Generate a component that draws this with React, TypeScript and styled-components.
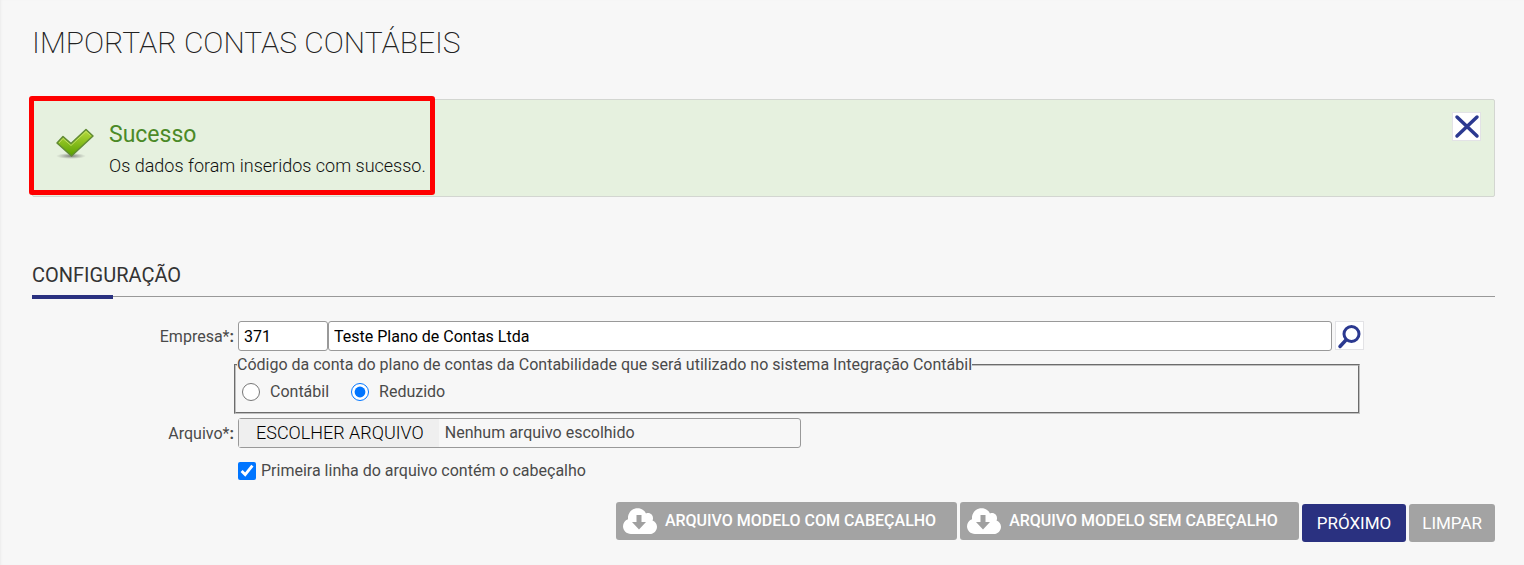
import React, { useState } from "react";
import styled, { createGlobalStyle } from "styled-components";

const navy = "#2a3180";
const grey = "#a3a3a3";

const GlobalStyle = createGlobalStyle`
  *, *::before, *::after { box-sizing: border-box; }
  html { background: #f7f7f7; }
  body {
    margin: 0;
    background: #f7f7f7;
    color: #4a4a4a;
    font-family: Roboto, "Liberation Sans", sans-serif;
    font-size: 16px;
    line-height: 20px;
  }
  input, button { font-family: inherit; font-size: inherit; line-height: inherit; }
`;

const Page = styled.main`
  min-height: 100vh;
  padding: 25px 29px 22px 32px;
  box-shadow: inset 2px 0 2px -1px #ececec;
`;

const Title = styled.h1`
  margin: 0 0 38px;
  color: #222;
  font-size: 30px;
  font-weight: 200;
  line-height: 36px;
`;

const Alert = styled.section`
  position: relative;
  display: flex;
  align-items: flex-start;
  height: 98px;
  padding: 12px 13px 0 22px;
  background: #e6f1df;
  border: 1px solid #d3d6d1;
  border-radius: 2px;
`;

const Highlight = styled.div`
  position: absolute;
  top: -4px;
  left: -4px;
  width: 406px;
  height: 99px;
  border: 5px solid #f00;
  border-radius: 3px;
  pointer-events: none;
`;

const CheckIcon = styled.svg`
  flex: none;
  width: 40px;
  height: 36px;
  margin-top: 14px;
`;

const AlertText = styled.div`
  flex: 1;
  margin-left: 14px;
  padding-top: 8px;
`;

const AlertTitle = styled.h2`
  margin: 0;
  color: #4b8a28;
  font-size: 23px;
  font-weight: 400;
  line-height: 30px;
`;

const AlertMessage = styled.p`
  margin: 4px 0 0;
  color: #111;
  font-size: 18px;
  font-weight: 300;
  line-height: 24px;
`;

const IconButton = styled.button`
  flex: none;
  display: flex;
  align-items: center;
  justify-content: center;
  width: 29px;
  height: 29px;
  padding: 0;
  background: #fff;
  border: 1px solid #e3e3e6;
  cursor: pointer;
`;

const SectionTitle = styled.h2`
  position: relative;
  margin: 66px 0 24px;
  padding-bottom: 9px;
  border-bottom: 1px solid #999;
  color: #333;
  font-size: 20px;
  font-weight: 400;
  line-height: 24px;

  &::after {
    content: "";
    position: absolute;
    left: 0;
    bottom: -3px;
    width: 81px;
    height: 4px;
    background: ${navy};
  }
`;

const Fields = styled.div`
  display: grid;
  grid-template-columns: 202px minmax(0, 1fr);
  column-gap: 4px;
  margin-right: 131px;
`;

const FieldLabel = styled.label`
  padding-top: 6px;
  text-align: right;
`;

const Strong = styled.b`
  font-weight: 700;
`;

const CompanyRow = styled.div`
  display: flex;
`;

const TextInput = styled.input<{ $code?: boolean }>`
  flex: ${(p) => (p.$code ? "0 0 90px" : "1 1 auto")};
  min-width: 0;
  height: 30px;
  padding: 0 5px;
  background: #fff;
  border: 1px solid #999;
  border-radius: 3px;
  color: #000;
`;

const SearchButton = styled(IconButton)`
  margin-left: 3px;
`;

const CodeGroup = styled.fieldset`
  grid-column: 2;
  margin: 4px 4px 4px -4px;
  padding: 7px 5px 10px 6px;
  min-width: 0;
  border: 2px groove #c0c0c0;
`;

const Legend = styled.legend`
  margin-left: -5px;
  padding: 0;
`;

const Options = styled.div`
  display: flex;
  gap: 22px;
`;

const Option = styled.label`
  display: flex;
  align-items: center;
  gap: 10px;
`;

const Choice = styled.input`
  width: 18px;
  height: 18px;
  margin: 0;
  accent-color: #0075ff;
`;

const FileControl = styled.label`
  display: flex;
  align-items: center;
  width: 50%;
  height: 30px;
  border: 1px solid #999;
  border-radius: 3px;
  cursor: pointer;
`;

const FileInput = styled.input`
  position: absolute;
  width: 1px;
  height: 1px;
  opacity: 0;
`;

const FileButton = styled.span`
  display: flex;
  align-items: center;
  height: 28px;
  margin-right: 6px;
  padding: 0 15px 0 17px;
  background: #efefef;
  color: #000;
  font-size: 18px;
  font-weight: 300;
`;

const HeaderOption = styled.label`
  grid-column: 2;
  display: flex;
  align-items: center;
  gap: 5px;
  margin-top: 13px;
`;

const Actions = styled.div`
  display: flex;
  justify-content: flex-end;
  gap: 3px;
  margin-top: 21px;
`;

const Button = styled.button<{ $primary?: boolean }>`
  height: 38px;
  margin-top: 2px;
  padding: 0 ${(p) => (p.$primary ? 15 : 13)}px;
  background: ${(p) => (p.$primary ? navy : grey)};
  border: 0;
  border-radius: 3px;
  color: #fff;
  font-size: 17px;
  cursor: pointer;
`;

const DownloadButton = styled.button`
  display: flex;
  align-items: center;
  gap: 8px;
  height: 38px;
  padding: 0 21px 0 7px;
  background: ${grey};
  border: 0;
  border-radius: 3px;
  color: #fff;
  font-weight: 500;
  cursor: pointer;
`;

const CloudIcon = () => (
  <svg width="34" height="26" viewBox="0 0 34 26" aria-hidden="true">
    <path
      fill="#fff"
      d="M8 26C3.500 26 0 22.600 0 18.300c0-3.300 2-6 5-7.100C4.500 4.800 9 .3 14.500.3c4 0 7 2 8.500 5.200 3.500-1.500 7.300 1 7 5.200-.1.700-.2 1.200-.5 1.700 2.700 1 4.500 3.400 4.500 6.300 0 4.100-3.200 7.300-7.200 7.300z"
    />
    <path fill="#a0a0a0" d="M13.500 7h5v7h4.500l-7 7.500-7-7.500h4.500z" />
  </svg>
);

const SuccessIcon = () => (
  <CheckIcon viewBox="0 0 40 36" aria-hidden="true">
    <defs>
      <linearGradient id="leaf" x1="0" y1="0" x2="0" y2="1">
        <stop offset="0" stopColor="#b9dc3c" />
        <stop offset="1" stopColor="#58a000" />
      </linearGradient>
      <radialGradient id="shade">
        <stop offset="0" stopColor="#555" stopOpacity="0.75" />
        <stop offset="1" stopColor="#777" stopOpacity="0" />
      </radialGradient>
    </defs>
    <ellipse cx="16" cy="30" rx="15" ry="3" fill="url(#shade)" />
    <path
      d="M2 17 8 10.500l8 7L31 3.500l7 6.500L16.500 30z"
      fill="url(#leaf)"
      stroke="#618b35"
      strokeWidth="1.500"
      strokeLinejoin="round"
    />
    <path d="m4 17 4-4.500 8 7L31 5.500l4.500 4" fill="none" stroke="#d2e87a" strokeOpacity="0.7" />
  </CheckIcon>
);

export default function App() {
  const [codeType, setCodeType] = useState("reduzido");
  const [fileName, setFileName] = useState("Nenhum arquivo escolhido");

  return (
    <>
      <GlobalStyle />
      <Page>
        <Title>IMPORTAR CONTAS CONTÁBEIS</Title>

        <Alert role="status">
          <Highlight />
          <SuccessIcon />
          <AlertText>
            <AlertTitle>Sucesso</AlertTitle>
            <AlertMessage>Os dados foram inseridos com sucesso.</AlertMessage>
          </AlertText>
          <IconButton type="button" aria-label="Fechar">
            <svg width="27" height="27" viewBox="0 0 27 27" aria-hidden="true">
              <path d="m4 4 20 19M24 4 4 23" stroke="#2b3990" strokeWidth="3.500" strokeLinecap="round" />
            </svg>
          </IconButton>
        </Alert>

        <form onSubmit={(e) => e.preventDefault()}>
          <SectionTitle>CONFIGURAÇÃO</SectionTitle>
          <Fields>
            <FieldLabel htmlFor="empresa">
              Empresa*<Strong>:</Strong>
            </FieldLabel>
            <CompanyRow>
              <TextInput id="empresa" $code defaultValue="371" />
              <TextInput aria-label="Nome da empresa" defaultValue="Teste Plano de Contas Ltda" />
              <SearchButton type="button" aria-label="Pesquisar empresa">
                <svg width="27" height="27" viewBox="0 0 27 27" fill="none" stroke="#2b3990" aria-hidden="true">
                  <circle cx="15.500" cy="12" r="7.500" strokeWidth="3" />
                  <path d="m10 18-6 6.500" strokeWidth="3.500" strokeLinecap="round" />
                </svg>
              </SearchButton>
            </CompanyRow>

            <CodeGroup>
              <Legend>
                Código da conta do plano de contas da Contabilidade que será utilizado no sistema Integração Contábil
              </Legend>
              <Options>
                <Option>
                  <Choice
                    type="radio"
                    name="codigo"
                    checked={codeType === "contabil"}
                    onChange={() => setCodeType("contabil")}
                  />
                  Contábil
                </Option>
                <Option>
                  <Choice
                    type="radio"
                    name="codigo"
                    checked={codeType === "reduzido"}
                    onChange={() => setCodeType("reduzido")}
                  />
                  Reduzido
                </Option>
              </Options>
            </CodeGroup>

            <FieldLabel htmlFor="arquivo">
              Arquivo*<Strong>:</Strong>
            </FieldLabel>
            <FileControl>
              <FileInput
                id="arquivo"
                type="file"
                onChange={(e) => setFileName(e.target.files?.[0]?.name ?? "Nenhum arquivo escolhido")}
              />
              <FileButton>ESCOLHER ARQUIVO</FileButton>
              {fileName}
            </FileControl>

            <HeaderOption>
              <Choice type="checkbox" defaultChecked />
              Primeira linha do arquivo contém o cabeçalho
            </HeaderOption>
          </Fields>

          <Actions>
            <DownloadButton type="button">
              <CloudIcon />
              ARQUIVO MODELO COM CABEÇALHO
            </DownloadButton>
            <DownloadButton type="button">
              <CloudIcon />
              ARQUIVO MODELO SEM CABEÇALHO
            </DownloadButton>
            <Button type="submit" $primary>
              PRÓXIMO
            </Button>
            <Button type="reset">LIMPAR</Button>
          </Actions>
        </form>
      </Page>
    </>
  );
}
